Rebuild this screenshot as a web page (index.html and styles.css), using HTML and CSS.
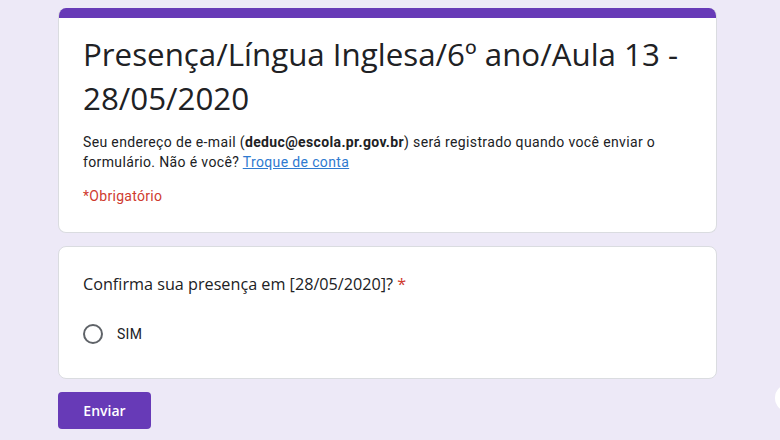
FILE: index.html
```html
<!doctype html>
<html lang="pt-BR">
<head>
	<meta charset="UTF-8">
	<title>Presença/Língua Inglesa/6º ano/Aula 13 - 28/05/2020</title>
	<link rel="stylesheet" href="styles.css">
</head>
<body>
	<div class="form">
		<div class="card header-card">
			<div class="card-bar"></div>
			<div class="card-body">
				<h1 class="form-title">Presença/Língua Inglesa/6º ano/Aula 13 - 28/05/2020</h1>
				<p class="form-desc">Seu endereço de e-mail (<b>deduc@escola.pr.gov.br</b>) será registrado quando você enviar o formulário. Não é você? <a href="#">Troque de conta</a></p>
				<div class="required-note">*Obrigatório</div>
			</div>
		</div>

		<div class="card question-card">
			<div class="question">Confirma sua presença em [28/05/2020]? <span class="star">*</span></div>
			<label class="option">
				<span class="radio"></span>
				<span class="option-text">SIM</span>
			</label>
		</div>

		<div class="actions">
			<button class="btn-submit">Enviar</button>
		</div>
	</div>

	<div class="fab"></div>
</body>
</html>
```

FILE: styles.css
```css
html, body {
	margin: 0;
	padding: 0;
}

body {
	background: #ede9f7;
	font-family: Roboto, "Liberation Sans", sans-serif;
	color: #202124;
	height: 440px;
	overflow: hidden;
}

.form {
	width: 659px;
	margin-left: 58px;
	padding-top: 8px;
}

.card {
	background: #fff;
	border: 1px solid #dadce0;
	border-radius: 8px;
	margin-bottom: 13px;
}

.header-card {
	border-top: none;
	overflow: hidden;
}

.card-bar {
	height: 10px;
	background: #673ab7;
}

.card-body {
	padding: 14px 24px 26px;
}

.form-title {
	margin: 0;
	font-family: "Open Sans", Roboto, sans-serif;
	font-weight: 400;
	font-size: 31.3px;
	line-height: 44px;
	color: #202124;
}

.form-desc {
	margin: 12px 0 0;
	font-size: 14px;
	line-height: 20px;
	letter-spacing: 0.36px;
}

.form-desc a {
	color: #2f7ad0;
}

.required-note {
	margin-top: 14px;
	font-size: 14px;
	line-height: 20px;
	letter-spacing: 0.3px;
	color: #cf3a2f;
}

.question-card {
	padding: 25px 24px 32px;
}

.question {
	font-family: "Open Sans", Roboto, sans-serif;
	font-size: 16.2px;
	line-height: 24px;
}

.star {
	color: #cf3a2f;
}

.option {
	display: flex;
	align-items: center;
	gap: 14px;
	margin-top: 26px;
	height: 24px;
}

.radio {
	width: 16px;
	height: 16px;
	border: 2px solid #5f6368;
	border-radius: 50%;
}

.option-text {
	font-size: 14px;
	letter-spacing: 0.3px;
}

.btn-submit {
	width: 93px;
	height: 37px;
	border: none;
	border-radius: 4px;
	background: #673ab7;
	color: #fff;
	font-family: "Open Sans", Roboto, sans-serif;
	font-weight: 600;
	font-size: 14px;
}

.fab {
	position: absolute;
	left: 775px;
	top: 384px;
	width: 28px;
	height: 28px;
	border-radius: 50%;
	background: #fff;
}
```
